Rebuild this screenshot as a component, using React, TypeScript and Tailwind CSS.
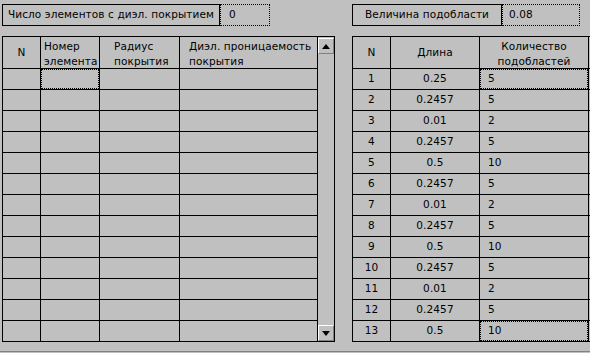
import React from 'react';

const rows = [
  ['1', '0.25', '5'],
  ['2', '0.2457', '5'],
  ['3', '0.01', '2'],
  ['4', '0.2457', '5'],
  ['5', '0.5', '10'],
  ['6', '0.2457', '5'],
  ['7', '0.01', '2'],
  ['8', '0.2457', '5'],
  ['9', '0.5', '10'],
  ['10', '0.2457', '5'],
  ['11', '0.01', '2'],
  ['12', '0.2457', '5'],
  ['13', '0.5', '10'],
];

function Focus() {
  return <div className="absolute inset-0 border border-dotted border-black pointer-events-none" />;
}

function ScrollButton({ up }: { up?: boolean }) {
  return (
    <div className="w-[16px] h-[16px] bg-[#c0c0c0] border-t border-l border-t-white border-l-white border-b border-r border-b-[#808080] border-r-[#808080] flex items-center justify-center">
      <svg width="8" height="5" viewBox="0 0 8 5">
        {up ? <polygon points="0,5 8,5 4,0" fill="black" /> : <polygon points="0,0 8,0 4,5" fill="black" />}
      </svg>
    </div>
  );
}

export default function App() {
  return (
    <div
      className="w-[590px] h-[353px] bg-[#c0c0c0] overflow-hidden text-[10.5px] tracking-[0.1px] text-black flex flex-col"
      style={{ fontFamily: '"DejaVu Sans", sans-serif' }}
    >
      {/* top fields */}
      <div className="flex mt-[4px] h-[22px]">
        <div className="ml-[2px] flex w-[268px]">
          <div className="w-[218px] border border-black flex items-center justify-center">
            Число элементов с диэл. покрытием
          </div>
          <div className="flex-1 border border-dotted border-black flex items-center pl-[8px]">0</div>
        </div>
        <div className="ml-[82px] flex w-[228px]">
          <div className="w-[150px] border border-black flex items-center justify-center">Величина подобласти</div>
          <div className="flex-1 border border-dotted border-black flex items-center pl-[6px]">0.08</div>
        </div>
      </div>

      <div className="flex mt-[10px]">
        {/* left table */}
        <div className="ml-[2px] flex border-l border-t border-black h-[306px]">
          <div className="flex flex-col">
            <div className="flex h-[32px]">
              <div className="w-[38px] border-r border-b border-black flex items-center justify-center">N</div>
              <div className="w-[59px] border-r border-b border-black pl-[3px] pt-[2px] leading-[15px]">
                Номер<br />элемента
              </div>
              <div className="w-[80px] border-r border-b border-black pl-[14px] pt-[2px] leading-[15px]">
                Радиус<br />покрытия
              </div>
              <div className="w-[138px] border-r border-b border-black pl-[9px] pt-[2px] leading-[15px]">
                Диэл. проницаемость<br />покрытия
              </div>
            </div>
            {rows.map((_, i) => (
              <div key={i} className="flex h-[21px]">
                <div className="w-[38px] border-r border-b border-black" />
                <div className="w-[59px] border-r border-b border-black relative">{i === 0 && <Focus />}</div>
                <div className="w-[80px] border-r border-b border-black" />
                <div className="w-[138px] border-r border-b border-black" />
              </div>
            ))}
          </div>
          <div className="w-[17px] border-r border-b border-black flex flex-col justify-between pt-[1px]">
            <ScrollButton up />
            <ScrollButton />
          </div>
        </div>

        {/* right table */}
        <div className="ml-[17px] flex flex-col border-l border-t border-black h-[306px] w-[260px] shrink-0">
          <div className="flex h-[32px]">
            <div className="w-[38px] shrink-0 border-r border-b border-black flex items-center justify-center">N</div>
            <div className="w-[89px] shrink-0 border-r border-b border-black flex items-center justify-center">Длина</div>
            <div className="w-[109px] shrink-0 border-r border-b border-black flex flex-col items-center pt-[2px] leading-[15px]">
              <span>Количество</span>
              <span>подобластей</span>
            </div>
            <div className="w-[40px] shrink-0 border-b border-black" />
          </div>
          {rows.map((r, i) => (
            <div key={i} className="flex h-[21px]">
              <div className="w-[38px] shrink-0 border-r border-b border-black flex items-center justify-center">{r[0]}</div>
              <div className="w-[89px] shrink-0 border-r border-b border-black flex items-center justify-center">{r[1]}</div>
              <div className="w-[109px] shrink-0 border-r border-b border-black flex items-center pl-[8px] relative">
                {r[2]}
                {(i === 0 || i === 12) && <Focus />}
              </div>
              <div className="w-[40px] shrink-0 border-b border-black" />
            </div>
          ))}
        </div>
      </div>

      <div className="mt-[9px] border-t border-[#808080] h-[1px] bg-white" />
    </div>
  );
}
